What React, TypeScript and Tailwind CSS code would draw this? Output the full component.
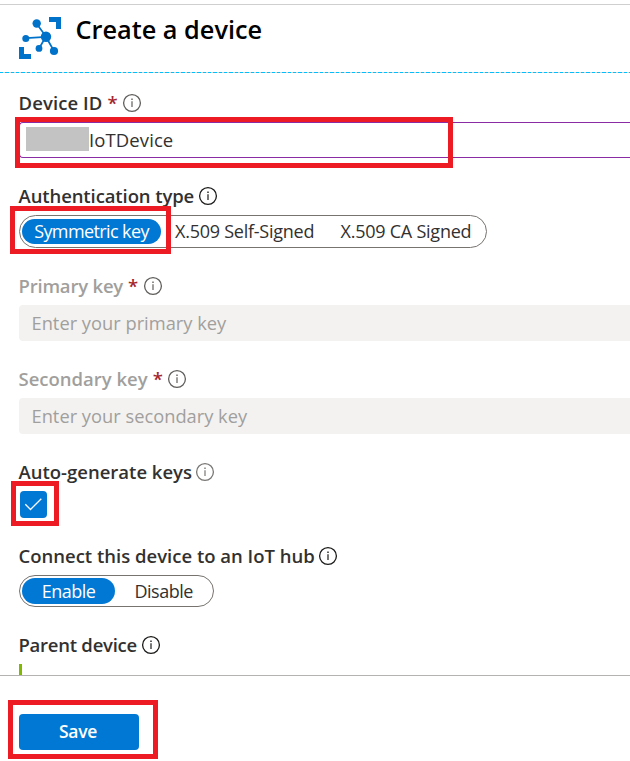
import type { ReactNode } from "react";

function InfoIcon({ className = "text-[#605e5c]" }: { className?: string }) {
  return (
    <svg viewBox="0 0 20 20" className={`-mt-px h-5 w-5 shrink-0 ${className}`} fill="none" stroke="currentColor">
      <circle cx="10" cy="10" r="8.4" strokeWidth="1.3" />
      <path d="M10 8.2V14" strokeWidth="1.2" />
      <path d="M10 5.6V7" strokeWidth="1.4" />
    </svg>
  );
}

function HubIcon() {
  return (
    <svg viewBox="0 0 42 42" className="h-[42px] w-[42px] shrink-0" fill="#0072c9">
      <path d="M30 0h12v12h-5V5h-7zM0 30h5v7h7v5H0z" />
      <path d="M17.5 6.5L27 19.5 20 31.5M7 21.2l20-1.2 8 14" fill="none" stroke="#0072c9" strokeWidth="1.7" />
      <circle cx="17.7" cy="6.5" r="4.2" />
      <circle cx="27" cy="19.7" r="5.2" />
      <circle cx="6.8" cy="21.4" r="3.5" />
      <circle cx="20" cy="31.4" r="3.4" />
      <circle cx="35" cy="34" r="4.1" />
    </svg>
  );
}

function Label({
  children,
  width,
  required,
  muted,
  icon,
  tracking = "",
}: {
  children: ReactNode;
  width: string;
  required?: boolean;
  muted?: boolean;
  icon?: string;
  tracking?: string;
}) {
  return (
    <div className={`flex h-[26px] items-center text-[18.5px] font-semibold ${muted ? "text-[#a19f9d]" : "text-[#323130]"}`}>
      <span className={`-mt-px flex shrink-0 gap-[5px] whitespace-nowrap ${width}`}>
        <span className={`-ml-[0.5px] ${tracking}`}>{children}</span>
        {required && <span className="text-[#a4262c]">*</span>}
      </span>
      <InfoIcon className={icon} />
    </div>
  );
}

function Highlight({ className }: { className: string }) {
  return <div className={`pointer-events-none absolute border-[5px] border-[#ed1c24] ${className}`} />;
}

export default function App() {
  return (
    <div className="relative flex h-[761px] w-[630px] flex-col overflow-hidden bg-white font-['Open_Sans','Noto_Sans',sans-serif] text-[18px] leading-[26px] text-[#323130]">
      <header className="mt-1 flex h-[68px] shrink-0 border-t border-[#cfcfcf] pl-[19px] pt-3">
        <HubIcon />
        <h1 className="-mt-px ml-[14.5px] h-[30px] whitespace-nowrap text-[25.3px] font-semibold leading-[26px] text-black">
          Create a device
        </h1>
      </header>
      <svg className="h-px w-full shrink-0" viewBox="0 0 630 1" shapeRendering="crispEdges">
        <path d="M0 .5H630" stroke="#d8d4d0" />
        <path d="M0 .5H630" stroke="#00bfff" strokeDasharray="3.33 2" />
      </svg>

      <main className="flex h-[602px] shrink-0 flex-col overflow-hidden pl-[19px] pt-[17px]">
        <Label width="w-[103px]" required tracking="tracking-[0.1px]">Device ID</Label>
        <div className="mt-[6px] flex h-9 shrink-0 items-center rounded-l-sm border-y border-l border-[#8a2da5] pl-[6px] text-[18.5px] tracking-[0.1px]">
          <span className="h-6 w-[63px] -translate-y-px bg-[#c3c3c3]" />
          <span>IoTDevice</span>
        </div>

        <div className="mt-[25px]">
          <Label width="w-[179px]" icon="text-[#1b1a19]" tracking="tracking-[-0.1px]">Authentication type</Label>
        </div>
        <div className="mt-[6px] flex h-[33px] w-[468px] shrink-0 items-center rounded-full border border-[#77736f] pl-[2px]">
          <span className="flex h-[25px] w-[139px] items-center justify-center rounded-full bg-[#0078d4] pb-px tracking-[-0.6px] text-white">Symmetric key</span>
          <span className="-mt-px ml-[14px] w-[165.5px] whitespace-nowrap tracking-[-0.25px]">X.509 Self-Signed</span>
          <span className="-mt-px whitespace-nowrap tracking-[-0.24px]">X.509 CA Signed</span>
        </div>

        <div className="mt-[25px]">
          <Label width="w-[124px]" required muted tracking="tracking-[-0.2px]">Primary key</Label>
        </div>
        <div className="mt-[6px] flex h-9 shrink-0 items-center rounded-l-sm bg-[#f3f2f1] pl-[12.5px] text-[18.3px] text-[#a19f9d]">Enter your primary key</div>

        <div className="mt-[25px]">
          <Label width="w-[148px]" required muted>Secondary key</Label>
        </div>
        <div className="mt-[6px] flex h-9 shrink-0 items-center rounded-l-sm bg-[#f3f2f1] pl-[12.5px] text-[18.3px] text-[#a19f9d]">Enter your secondary key</div>

        <div className="mt-[25px]">
          <Label width="w-[176px]" icon="text-[#797775]">Auto-generate keys</Label>
        </div>
        <div className="ml-px mt-[6px] flex h-[27px] w-[27px] shrink-0 items-center justify-center rounded-sm bg-[#0078d4]">
          <svg viewBox="0 0 27 27" className="h-full w-full" fill="none" stroke="white" strokeWidth="1.3">
            <path d="M5.3 13.2l5.2 5.3L21.3 7.8" />
          </svg>
        </div>

        <div className="mt-[25px]">
          <Label width="w-[299px]" icon="text-[#1b1a19]">Connect this device to an IoT hub</Label>
        </div>
        <div className="mt-[6px] flex h-8 w-[195px] shrink-0 items-center rounded-full border border-[#77736f] pl-[2px] tracking-[-0.5px]">
          <span className="flex h-[26px] w-[93px] items-center justify-center rounded-full bg-[#0078d4] text-white">Enable</span>
          <span className="ml-[19.5px]">Disable</span>
        </div>

        <div className="mt-[25px]">
          <Label width="w-[122px]" icon="text-[#1b1a19]" tracking="tracking-[-0.25px]">Parent device</Label>
        </div>
        <div className="mt-[6px] h-[11px] w-[3px] shrink-0 bg-[#7fba00]" />
      </main>

      <footer className="flex h-[86px] shrink-0 border-t border-[#b5b3b1] pl-[19px] pt-[38px]">
        <button className="h-9 w-[120px] rounded-sm bg-[#0078d4] pb-[3px] pr-[2px] text-[17.5px] font-semibold leading-[32px] tracking-[-0.3px] text-white">Save</button>
      </footer>

      <Highlight className="left-[15px] top-[117px] h-[51px] w-[438px]" />
      <Highlight className="left-[10px] top-[206px] h-12 w-[161px]" />
      <Highlight className="left-[11px] top-[481px] h-[45px] w-12" />
      <Highlight className="left-2 top-[700px] h-[59px] w-[150px]" />
    </div>
  );
}
